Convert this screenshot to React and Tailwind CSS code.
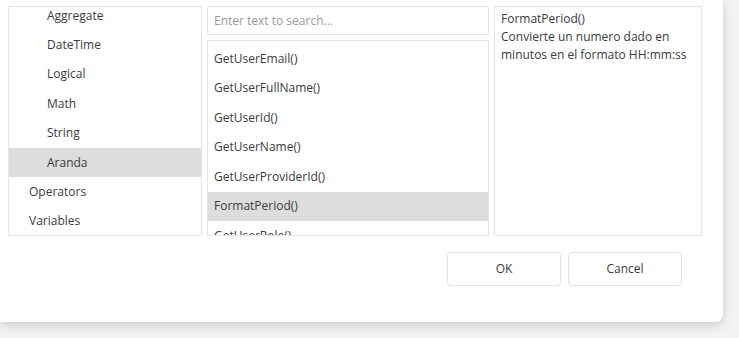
import React from "react";

const categories = [
  { label: "Aggregate", indent: true },
  { label: "DateTime", indent: true },
  { label: "Logical", indent: true },
  { label: "Math", indent: true },
  { label: "String", indent: true },
  { label: "Aranda", indent: true, selected: true },
  { label: "Operators" },
  { label: "Variables" },
];

const functions = [
  "GetUserEmail()",
  "GetUserFullName()",
  "GetUserId()",
  "GetUserName()",
  "GetUserProviderId()",
  "FormatPeriod()",
  "GetUserRole()",
];

export default function App() {
  return (
    <div
      className="w-[739px] h-[338px] bg-[#f4f4f4] overflow-hidden text-[12px] text-[#3a3a3a]"
      style={{ fontFamily: '"Open Sans", "Noto Sans", sans-serif' }}
    >
      <div className="w-[723px] h-[322px] bg-white rounded-br-lg shadow-[0_3px_12px_rgba(0,0,0,0.18)] pl-2 pt-[6px]">
        <div className="flex gap-[5px] h-[230px]">
          {/* categories */}
          <div className="w-[194px] border border-[#e6e6e6] overflow-hidden">
            <div className="-mt-[6px]">
              {categories.map((c) => (
                <div
                  key={c.label}
                  className={`h-[29.4px] flex items-center ${c.indent ? "pl-[38px]" : "pl-5"} ${c.selected ? "bg-[#dddddd]" : ""}`}
                >
                  {c.label}
                </div>
              ))}
            </div>
          </div>

          {/* search + functions */}
          <div className="w-[282px] flex flex-col gap-[5px]">
            <div className="h-[29px] border border-[#e3e3e3] rounded-[3px] flex items-center px-[6px] text-[#9a9a9a]">
              Enter text to search...
            </div>
            <div className="flex-1 border border-[#e6e6e6] overflow-hidden pt-[3px]">
              {functions.map((f, i) => (
                <div
                  key={f}
                  className={`h-[29.5px] flex items-center px-[6px] ${i === 5 ? "bg-[#dddddd]" : ""}`}
                >
                  {f}
                </div>
              ))}
            </div>
          </div>

          {/* description */}
          <div className="w-[208px] border border-[#e6e6e6] px-[6px] pt-[3px] leading-[18px]">
            <div>FormatPeriod()</div>
            <div>Convierte un numero dado en minutos en el formato HH:mm:ss</div>
          </div>
        </div>

        <div className="flex justify-end gap-[7px] pr-[41px] mt-4">
          <button className="w-[114px] h-[34px] border border-[#e3e3e3] rounded-[4px] bg-white">
            OK
          </button>
          <button className="w-[114px] h-[34px] border border-[#e3e3e3] rounded-[4px] bg-white">
            Cancel
          </button>
        </div>
      </div>
    </div>
  );
}
